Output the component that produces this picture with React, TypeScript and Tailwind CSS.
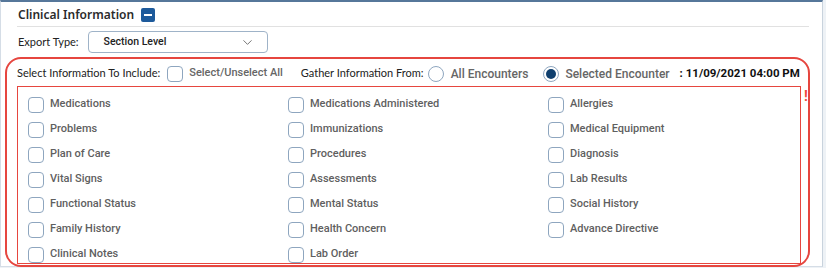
import { ChevronDown } from 'lucide-react'

const items = [
  'Medications', 'Medications Administered', 'Allergies',
  'Problems', 'Immunizations', 'Medical Equipment',
  'Plan of Care', 'Procedures', 'Diagnosis',
  'Vital Signs', 'Assessments', 'Lab Results',
  'Functional Status', 'Mental Status', 'Social History',
  'Family History', 'Health Concern', 'Advance Directive',
  'Clinical Notes', 'Lab Order',
]

const ui = { fontFamily: '"Noto Sans", "Open Sans", sans-serif' }
const lt = { fontFamily: 'Lato, "Noto Sans", sans-serif' }
const rb = { fontFamily: 'Roboto, "Liberation Sans", sans-serif' }

function Box() {
  return <span className="w-[16px] h-[16px] shrink-0 rounded-[4px] border border-[#8ea6bf] bg-white" />
}

export default function App() {
  return (
    <div className="w-[826px] h-[268px] bg-[#eef2f6] overflow-hidden whitespace-nowrap">
      <div className="w-[823px] h-[267px] bg-white border-t-2 border-t-[#56779a] border-l border-l-[#d5dde6] border-r border-r-[#c9d3dd] border-b border-b-[#d5dde6] relative">
        {/* Header */}
        <div className="flex items-center h-[24px] pl-[17px] pt-[2px]">
          <span className="text-[12px] font-semibold text-[#2b2b2b]" style={ui}>Clinical Information</span>
          <span className="ml-[7px] w-[14px] h-[14px] shrink-0 rounded-[2px] bg-[#1d5a9b] flex items-center justify-center">
            <span className="w-[8px] h-[2px] bg-white" />
          </span>
        </div>
        <div className="ml-[16px] w-[792px] h-px bg-[#e1e1e1]" />

        {/* Export type */}
        <div className="flex items-center pl-[17px] mt-[4px] h-[22px]">
          <span className="text-[11px] text-[#222]" style={lt}>Export Type:</span>
          <div className="ml-[9px] w-[180px] h-[22px] shrink-0 rounded-[4px] border border-[#9fb3c8] flex items-center justify-between pl-[15px] pr-[12px]">
            <span className="text-[10.5px] font-medium text-[#222]" style={rb}>Section Level</span>
            <ChevronDown size={15} strokeWidth={1.3} className="text-[#555]" />
          </div>
        </div>

        {/* Red selection area */}
        <div className="mt-[4px] ml-[4px] w-[805px] h-[210px] rounded-[16px] border-2 border-[#e6463f] relative">
          <div className="flex items-center h-[27px] pl-[10px] pt-[2px]">
            <span className="text-[11px] text-[#222]" style={lt}>Select Information To Include:</span>
            <span className="ml-[7px] w-[16px] h-[16px] shrink-0 rounded-[4px] border border-[#8ea6bf]" />
            <span className="ml-[6px] text-[11px] font-medium text-[#666]" style={rb}>Select/Unselect All</span>
            <span className="ml-[18px] text-[11px] text-[#222]" style={lt}>Gather Information From:</span>
            <span className="ml-[4px] w-[16px] h-[16px] shrink-0 rounded-full border border-[#8ea6bf]" />
            <span className="ml-[7px] text-[12px] font-medium text-[#666]" style={rb}>All Encounters</span>
            <span className="ml-[15px] w-[16px] h-[16px] shrink-0 rounded-full border border-[#8ea6bf] flex items-center justify-center">
              <span className="w-[10px] h-[10px] rounded-full bg-[#0f3f6e]" />
            </span>
            <span className="ml-[6px] text-[12px] font-medium text-[#666]" style={rb}>Selected Encounter</span>
            <span className="ml-[10px] text-[11.5px] font-bold text-[#111]" style={rb}>: 11/09/2021 04:00 PM</span>
          </div>
          <div className="ml-[10px] w-[784px] h-[178px] border border-[#e6463f] grid grid-cols-[260px_260px_1fr] auto-rows-[25px] pl-[10px] pt-[5px]">
            {items.map(label => (
              <div key={label} className="flex items-center gap-[6px]">
                <Box />
                <span className="text-[11px] font-medium text-[#5f5f5f]" style={rb}>{label}</span>
              </div>
            ))}
          </div>
          <span className="absolute left-[797px] top-[30px] text-[14px] leading-[14px] font-bold text-[#f0463a]" style={rb}>!</span>
        </div>
      </div>
    </div>
  )
}
